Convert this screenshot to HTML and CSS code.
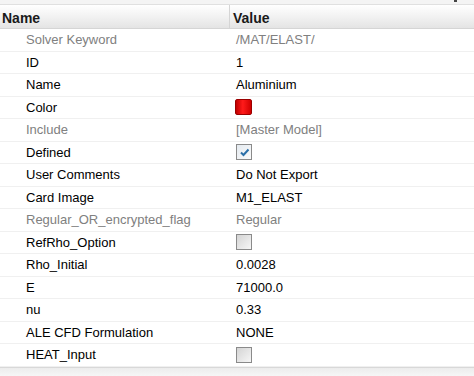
FILE: index.html
```html
<!DOCTYPE html>
<html>
<head>
<meta charset="utf-8">
<link rel="stylesheet" href="styles.css">
</head>
<body>
<div class="panel">
  <div class="topstrip"><span class="dot"></span></div>
  <div class="header">
    <div class="hcell name">Name</div>
    <div class="hcell value">Value</div>
  </div>
  <div class="rows">
    <div class="row dim"><div class="c1">Solver Keyword</div><div class="c2">/MAT/ELAST/</div></div>
    <div class="row"><div class="c1">ID</div><div class="c2">1</div></div>
    <div class="row"><div class="c1">Name</div><div class="c2">Aluminium</div></div>
    <div class="row"><div class="c1">Color</div><div class="c2"><span class="swatch"></span></div></div>
    <div class="row dim"><div class="c1">Include</div><div class="c2">[Master Model]</div></div>
    <div class="row"><div class="c1">Defined</div><div class="c2"><span class="check on"><svg width="11" height="11" viewBox="0 0 11 11"><path d="M2 5.5 L4.5 8 L9.5 2.5" fill="none" stroke="#2a6fa8" stroke-width="2"/></svg></span></div></div>
    <div class="row"><div class="c1">User Comments</div><div class="c2">Do Not Export</div></div>
    <div class="row"><div class="c1">Card Image</div><div class="c2">M1_ELAST</div></div>
    <div class="row dim"><div class="c1">Regular_OR_encrypted_flag</div><div class="c2">Regular</div></div>
    <div class="row"><div class="c1">RefRho_Option</div><div class="c2"><span class="check"></span></div></div>
    <div class="row"><div class="c1">Rho_Initial</div><div class="c2">0.0028</div></div>
    <div class="row"><div class="c1">E</div><div class="c2">71000.0</div></div>
    <div class="row"><div class="c1">nu</div><div class="c2">0.33</div></div>
    <div class="row"><div class="c1">ALE CFD Formulation</div><div class="c2">NONE</div></div>
    <div class="row"><div class="c1">HEAT_Input</div><div class="c2"><span class="check"></span></div></div>
  </div>
  <div class="footer"></div>
</div>
</body>
</html>
```
FILE: styles.css
```css
html, body { margin: 0; padding: 0; background: #fff; }
.panel {
  width: 474px;
  height: 376px;
  overflow: hidden;
  font-family: "Liberation Sans", Arial, sans-serif;
  font-size: 13px;
  color: #000;
  display: flex;
  flex-direction: column;
}
.topstrip {
  height: 4px;
  background: #f4f4f4;
  border-bottom: 1px solid #e0e0e0;
  position: relative;
  flex: none;
}
.dot {
  position: absolute;
  left: 454px;
  top: 0;
  width: 3px;
  height: 2px;
  background: #444;
}
.header {
  height: 23px;
  display: flex;
  background: linear-gradient(#ffffff, #f2f2f2 50%, #e4e4e4);
  border-bottom: 1px solid #d5d5d5;
  flex: none;
}
.hcell {
  display: flex;
  align-items: center;
  padding-top: 2px;
  box-sizing: border-box;
  font-size: 14px;
  font-weight: bold;
  color: #1a1a1a;
}
.hcell.name { width: 230px; padding-left: 2px; border-right: 1px solid #d5d5d5; }
.hcell.value { padding-left: 3px; }
.rows { flex: none; }
.row {
  height: 22.5px;
  display: flex;
  align-items: center;
  border-bottom: 1px solid #f0f0f0;
  box-sizing: border-box;
}
.c1 { width: 230px; padding-left: 26px; box-sizing: border-box; }
.c2 { padding-left: 6px; display: flex; align-items: center; }
.row.dim { color: #808080; }
.swatch {
  width: 17px;
  height: 16px;
  margin-left: -1px;
  border-radius: 2px;
  background: linear-gradient(90deg, #c00000, #ff1a1a 45%, #d00000);
  border: 1px solid #9a0000;
  box-sizing: border-box;
}
.check {
  width: 16px;
  height: 16px;
  border: 1px solid #8a8a8a;
  box-sizing: border-box;
  background: linear-gradient(135deg, #d4d4d4, #f6f6f6);
  display: flex;
  align-items: center;
  justify-content: center;
}
.check.on { background: linear-gradient(135deg, #e4eaf0, #fafafa); }
.footer {
  flex: 1;
  border-top: 1px solid #d8d8d8;
  background: linear-gradient(#ececec, #f6f6f6);
}
```
